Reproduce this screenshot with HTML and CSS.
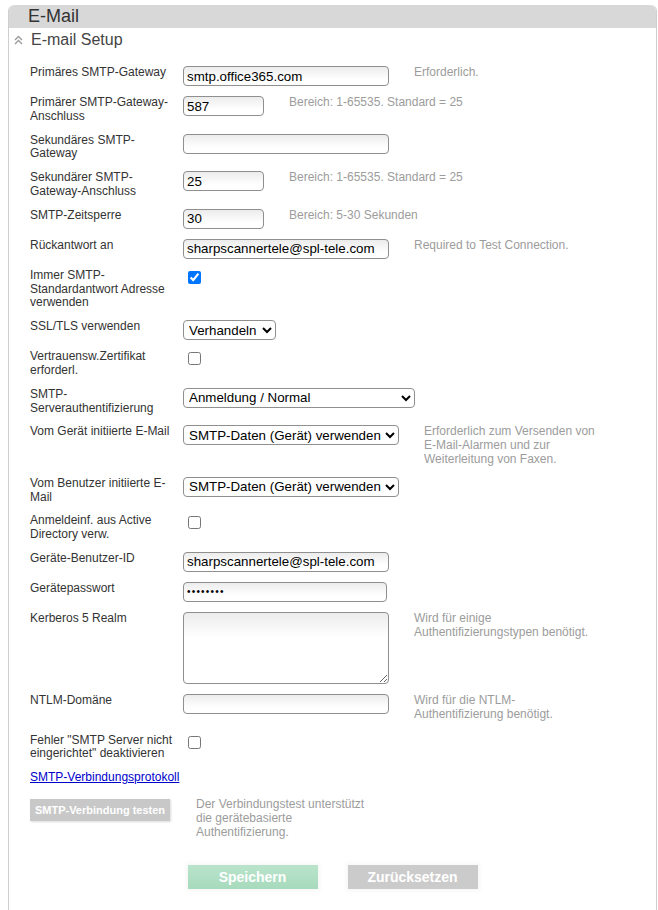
FILE: index.html
```html
<!DOCTYPE html>
<html lang="de">
<head>
    <meta charset="UTF-8">
    <meta name="viewport" content="width=device-width, initial-scale=1.0">
    <title>E-Mail Setup</title>
    <link rel="stylesheet" href="styles.css">
</head>
<body>
    <div class="panel">
        <div class="panel-title">E-Mail</div>

        <div class="section-head">
            <svg class="collapse-icon" width="9" height="10" viewBox="0 0 9 10">
                <path d="M1 5 L4.5 1.5 L8 5" />
                <path d="M1 9 L4.5 5.5 L8 9" />
            </svg>
            <span>E-mail Setup</span>
        </div>

        <form class="form">
            <div class="row">
                <label class="label">Primäres SMTP-Gateway</label>
                <input class="field wide" type="text" value="smtp.office365.com">
                <span class="hint">Erforderlich.</span>
            </div>
            <div class="row">
                <label class="label">Primärer SMTP-Gateway-Anschluss</label>
                <input class="field short" type="text" value="587">
                <span class="hint">Bereich: 1-65535. Standard = 25</span>
            </div>
            <div class="row">
                <label class="label">Sekundäres SMTP-Gateway</label>
                <input class="field wide" type="text" value="">
            </div>
            <div class="row">
                <label class="label">Sekundärer SMTP-Gateway-Anschluss</label>
                <input class="field short" type="text" value="25">
                <span class="hint">Bereich: 1-65535. Standard = 25</span>
            </div>
            <div class="row">
                <label class="label">SMTP-Zeitsperre</label>
                <input class="field short" type="text" value="30">
                <span class="hint">Bereich: 5-30 Sekunden</span>
            </div>
            <div class="row">
                <label class="label">Rückantwort an</label>
                <input class="field wide" type="text" value="sharpscannertele@spl-tele.com">
                <span class="hint">Required to Test Connection.</span>
            </div>
            <div class="row">
                <label class="label">Immer SMTP-Standardantwort Adresse verwenden</label>
                <input class="check" type="checkbox" checked>
            </div>
            <div class="row">
                <label class="label">SSL/TLS verwenden</label>
                <select class="select select-ssl">
                    <option>Verhandeln</option>
                </select>
            </div>
            <div class="row">
                <label class="label">Vertrauensw.Zertifikat erforderl.</label>
                <input class="check" type="checkbox">
            </div>
            <div class="row">
                <label class="label">SMTP-Serverauthentifizierung</label>
                <select class="select select-auth">
                    <option>Anmeldung / Normal</option>
                </select>
            </div>
            <div class="row">
                <label class="label">Vom Gerät initiierte E-Mail</label>
                <select class="select select-data">
                    <option>SMTP-Daten (Gerät) verwenden</option>
                </select>
                <span class="hint">Erforderlich zum Versenden von E-Mail-Alarmen und zur Weiterleitung von Faxen.</span>
            </div>
            <div class="row">
                <label class="label">Vom Benutzer initiierte E-Mail</label>
                <select class="select select-data">
                    <option>SMTP-Daten (Gerät) verwenden</option>
                </select>
            </div>
            <div class="row">
                <label class="label">Anmeldeinf. aus Active Directory verw.</label>
                <input class="check" type="checkbox">
            </div>
            <div class="row">
                <label class="label">Geräte-Benutzer-ID</label>
                <input class="field wide" type="text" value="sharpscannertele@spl-tele.com">
            </div>
            <div class="row">
                <label class="label">Gerätepasswort</label>
                <input class="field wide pass" type="password" value="12345678">
            </div>
            <div class="row">
                <label class="label">Kerberos 5 Realm</label>
                <textarea class="field area"></textarea>
                <span class="hint">Wird für einige Authentifizierungstypen benötigt.</span>
            </div>
            <div class="row row-tall">
                <label class="label">NTLM-Domäne</label>
                <input class="field wide" type="text" value="">
                <span class="hint">Wird für die NTLM-Authentifizierung benötigt.</span>
            </div>
            <div class="row">
                <label class="label">Fehler "SMTP Server nicht eingerichtet" deaktivieren</label>
                <input class="check" type="checkbox">
            </div>
            <div class="row link-row">
                <a href="#" class="log-link">SMTP-Verbindungsprotokoll</a>
            </div>
            <div class="row test-row">
                <button type="button" class="btn-test">SMTP-Verbindung testen</button>
                <span class="hint">Der Verbindungstest unterstützt die gerätebasierte Authentifizierung.</span>
            </div>

            <div class="actions">
                <button type="button" class="btn-main btn-save">Speichern</button>
                <button type="button" class="btn-main btn-reset">Zurücksetzen</button>
            </div>
        </form>
    </div>
</body>
</html>
```

FILE: styles.css
```css
* {
    box-sizing: border-box;
}

body {
    margin: 0;
    background: #ffffff;
    font-family: 'Liberation Sans', Arial, sans-serif;
    color: #333333;
}

/* Panel */
.panel {
    margin: 5px 1px 0 8px;
    min-height: 905px;
    border-left: 1px solid #cfcfcf;
    border-right: 1px solid #cfcfcf;
    border-radius: 6px 6px 0 0;
}

.panel-title {
    height: 23px;
    line-height: 23px;
    padding-left: 19px;
    font-size: 18px;
    color: #333333;
    background: #d8d8d8;
    border-radius: 6px 6px 0 0;
}

.section-head {
    display: flex;
    align-items: center;
    gap: 8px;
    height: 20px;
    margin-top: 2px;
    padding-left: 5px;
    font-size: 16px;
    color: #444444;
}

.collapse-icon path {
    fill: none;
    stroke: #9a9a9a;
    stroke-width: 1.3;
}

/* Form */
.form {
    padding: 16px 0 0 21px;
}

.row {
    display: flex;
    align-items: flex-start;
    padding-bottom: 10px;
}

.row-tall {
    padding-bottom: 12px;
}

.label {
    flex: none;
    width: 153px;
    padding-right: 5px;
    font-size: 12px;
    line-height: 13.8px;
    color: #333333;
}

.hint {
    width: 180px;
    margin-left: 25px;
    font-size: 12px;
    line-height: 13.8px;
    color: #9c9c9c;
}

.field {
    flex: none;
    height: 20px;
    padding: 0 3px;
    margin: 0;
    border: 1px solid #8f8f8f;
    border-radius: 4px;
    font-family: 'Liberation Sans', Arial, sans-serif;
    font-size: 13.33px;
    color: #000000;
    background: linear-gradient(#ececec, #ffffff 70%);
}

.wide {
    width: 206px;
}

.short {
    width: 81px;
}

.pass {
    width: 204px;
    font-size: 10px;
    letter-spacing: 1.2px;
}

.area {
    width: 206px;
    height: 72px;
    resize: vertical;
    background: linear-gradient(#ececec, #ffffff 35%);
}

.check {
    flex: none;
    width: 13px;
    height: 13px;
    margin: 2px 0 0 5px;
}

.select {
    flex: none;
    height: 20px;
    margin: 0;
    padding: 0 1px;
    border: 1px solid #8f8f8f;
    border-radius: 4px;
    font-family: 'Liberation Sans', Arial, sans-serif;
    font-size: 13.33px;
    color: #000000;
    background: #ffffff;
}

.select-ssl {
    width: 93px;
}

.select-auth {
    width: 232px;
}

.select-data {
    width: 216px;
}

/* Link and test */
.link-row {
    padding-bottom: 13px;
}

.log-link {
    font-size: 12px;
    line-height: 13.8px;
    color: #0000cc;
}

.test-row .hint {
    margin-left: 26px;
}

.btn-test {
    flex: none;
    width: 140px;
    height: 22px;
    padding: 0;
    margin-top: 1px;
    border: none;
    white-space: nowrap;
    background: #c8c8c8;
    color: #ffffff;
    font-family: 'Liberation Sans', Arial, sans-serif;
    font-size: 11px;
    font-weight: 700;
    box-shadow: 1px 1px 2px rgba(0, 0, 0, 0.15);
}

/* Bottom buttons */
.actions {
    display: flex;
    justify-content: center;
    gap: 30px;
    margin: 16px 0 0 -21px;
}

.btn-main {
    width: 130px;
    height: 24px;
    border: none;
    color: #ffffff;
    font-family: 'Liberation Sans', Arial, sans-serif;
    font-size: 14px;
    font-weight: 700;
    box-shadow: 0 0 5px 2px rgba(0, 0, 0, 0.04);
}

.btn-save {
    background: linear-gradient(#b9e4cb, #a7dabd);
}

.btn-reset {
    background: #cbcbcb;
}
```
